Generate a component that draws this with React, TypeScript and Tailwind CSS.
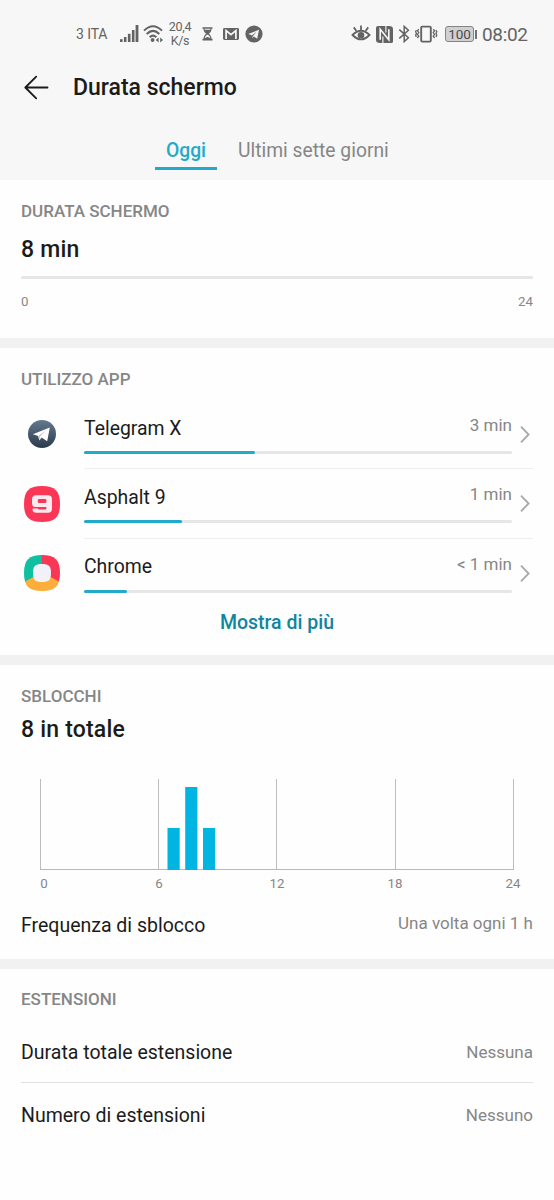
import React from 'react';

const apps = [
  { name: 'Telegram X', time: '3 min', percent: 40, Icon: TelegramXIcon },
  { name: 'Asphalt 9', time: '1 min', percent: 23, Icon: AsphaltIcon },
  { name: 'Chrome', time: '< 1 min', percent: 10, Icon: ChromeIcon },
];

const unlocks = [
  { x: 127.5, height: 42 },
  { x: 145.2, height: 83 },
  { x: 163, height: 42 },
];

function TelegramXIcon() {
  return (
    <svg width="36" height="36" viewBox="0 0 36 36">
      <defs>
        <linearGradient id="tgx" x1="0" y1="0" x2="0" y2="1">
          <stop offset="0" stopColor="#64798f" />
          <stop offset="1" stopColor="#2b3a4b" />
        </linearGradient>
      </defs>
      <circle cx="18" cy="18" r="14" fill="url(#tgx)" />
      <path d="M8.8 18.2 L25.8 11.6 L23.2 25.2 L17.6 21.6 L15.4 24.4 L14.2 19.9 Z" fill="#fff" />
      <path d="M14.2 19.9 L22 14.5 L16 20.8 L15.4 24.4 Z" fill="#c3ccd6" />
    </svg>
  );
}

function AsphaltIcon() {
  return (
    <svg width="36" height="36" viewBox="0 0 36 36">
      <path d="M18 0 C31 0 36 5 36 18 C36 31 31 36 18 36 C5 36 0 31 0 18 C0 5 5 0 18 0 Z" fill="#fb3757" />
      <path
        fillRule="evenodd"
        d="M12 9.2 H24 Q28 9.2 28 13 V22.8 Q28 26.8 24 26.8 H12.4 Q8.6 26.8 8.6 23.8 V22.6 H14 Q14 23.6 15 23.6 H21 Q22.4 23.6 22.4 22.4 V21 H12 Q8 21 8 17.4 V13 Q8 9.2 12 9.2 Z M15 13 Q13.8 13 13.8 14 V16 Q13.8 17 15 17 H21.2 Q22.4 17 22.4 16 V14 Q22.4 13 21.2 13 Z"
        fill="#fdeaf0"
      />
    </svg>
  );
}

function ChromeIcon() {
  return (
    <svg width="36" height="36" viewBox="0 0 36 36">
      <defs>
        <clipPath id="squircle">
          <path d="M18 0 C31 0 36 5 36 18 C36 31 31 36 18 36 C5 36 0 31 0 18 C0 5 5 0 18 0 Z" />
        </clipPath>
      </defs>
      <g clipPath="url(#squircle)">
        <path d="M18 18 V0 H0 V28 Z" fill="#0fc0a0" />
        <path d="M18 18 V0 H36 V28 Z" fill="#fb3757" />
        <path d="M18 17.5 L-2 28 V36 H38 V28 Z" fill="#fcad3a" />
      </g>
      <path d="M18 9 C25 9 27 11 27 18 C27 25 25 27 18 27 C11 27 9 25 9 18 C9 11 11 9 18 9 Z" fill="#f1f1f7" />
    </svg>
  );
}

function StatusBar() {
  return (
    <div className="flex h-14 pt-[22px] pl-[76px] text-[#636363]">
      <span className="w-[44px] text-[14px] leading-6 tracking-[-0.1px] whitespace-nowrap">3 ITA</span>
      {/* Signal */}
      <svg className="mt-[2px]" width="19" height="20" viewBox="0 0 19 20" fill="currentColor">
        <rect x="0" y="15.2" width="2.6" height="2.8" />
        <rect x="3.9" y="13" width="2.6" height="5" />
        <rect x="7.9" y="9.8" width="2.6" height="8.2" />
        <rect x="11.9" y="6" width="2.6" height="12" />
        <rect x="15.6" y="1" width="2.8" height="17" />
      </svg>
      {/* Wifi */}
      <svg className="ml-1" width="21" height="24" viewBox="0 0 21 24" fill="none" stroke="currentColor" strokeWidth="2">
        <path d="M1 8.6 Q10 -0.2 19 8.6" />
        <path d="M3.7 12 Q10 5.8 16.3 12" />
        <path d="M6.7 15.3 Q10 12 13.3 15.3" />
        <circle cx="9.6" cy="18" r="1.9" fill="currentColor" stroke="none" />
        <path d="M15.6 15.4 V20.6 L12.8 18 Z M17.2 15.4 V20.6 L20 18 Z" fill="currentColor" stroke="none" />
      </svg>
      <div className="ml-[3px] -mt-[2px] w-[26px] text-center text-[12.5px] leading-[14px] tracking-[-0.3px]">
        <div>20,4</div>
        <div>K/s</div>
      </div>
      {/* Hourglass */}
      <svg className="ml-[9px] mt-[5px]" width="11" height="14" viewBox="0 0 11 14" fill="none" stroke="currentColor" strokeWidth="1.2">
        <path d="M0.5 1 H10.5 M0.5 12.6 H10.5" strokeWidth="1.6" />
        <path d="M2 1.5 Q2 5 5.5 6.8 Q9 5 9 1.5 M2 12.4 Q2 8.6 5.5 6.8 Q9 8.6 9 12.4" />
        <path d="M3 3.4 H8 L5.5 6.5 Z M3 12 Q5.5 9 8 12 Z" fill="currentColor" />
      </svg>
      {/* Gmail */}
      <svg className="ml-[10px] mt-[6px]" width="16" height="12" viewBox="0 0 16 12">
        <rect width="16" height="12" rx="1.4" fill="currentColor" />
        <path d="M3.1 11 V2.6 L8 6.6 L12.9 2.6 V11" fill="none" stroke="#f7f7f7" strokeWidth="1.7" />
      </svg>
      {/* Telegram */}
      <svg className="ml-[6px] mt-[3px]" width="18" height="18" viewBox="0 0 18 18">
        <circle cx="9" cy="9" r="8.6" fill="currentColor" />
        <path d="M3.3 9 L14 4.7 L12.2 13.8 L8.8 11.4 L7.2 13 L6.8 10.3 Z" fill="#f7f7f7" />
        <path d="M7 10.3 L11.8 6.5 L8 11 L7.2 12.7 Z" fill="currentColor" />
      </svg>

      <div className="ml-[88px] flex items-start">
        {/* Eye comfort */}
        <svg className="mt-[2px]" width="20" height="19" viewBox="0 0 20 19" fill="none" stroke="currentColor" strokeWidth="1.8">
          <path d="M1.5 11 Q10 2.6 18.5 11 Q10 19.8 1.5 11 Z" />
          <circle cx="10" cy="11.2" r="3.3" fill="currentColor" stroke="none" />
          <path d="M10 6.4 V1.4 M5.4 7 L2.8 3.4 M14.6 7 L17.2 3.4" />
        </svg>
        {/* NFC */}
        <svg className="ml-[5px] mt-[4px]" width="17" height="17" viewBox="0 0 17 17">
          <path d="M2 0 H13 Q17 0 17 3 V15.4 Q17 17 15 17 H4 Q0 17 0 14 V2 Q0 0 2 0 Z" fill="currentColor" />
          <path d="M4.2 13.8 V3.2 L12.8 13.8 V3.2" fill="none" stroke="#f7f7f7" strokeWidth="1.6" />
          <path d="M6.9 17 V10.4 M9.9 0 V6.6" fill="none" stroke="#f7f7f7" strokeWidth="1.1" />
        </svg>
        {/* Bluetooth */}
        <svg className="ml-[5px] mt-[3px]" width="13" height="18" viewBox="0 0 13 18" fill="none" stroke="currentColor" strokeWidth="1.5">
          <path d="M1.3 4.6 L10.4 12.8 L6.2 16.6 V1.4 L10.4 5.2 L1.3 13.4" />
        </svg>
        {/* Vibration */}
        <svg className="ml-[4px] mt-[3px]" width="23" height="18" viewBox="0 0 23 18" fill="none" stroke="currentColor">
          <rect x="6.2" y="1.6" width="9.6" height="15" rx="1" strokeWidth="1.9" />
          <path
            d="M3.8 4.2 L2.4 5.8 L3.8 7.6 L2.4 9.4 L3.8 11.2 L2.4 13 M1.4 5.2 L0.6 6.6 L1.4 8.4 L0.6 10.2 L1.4 12 M18.2 4.2 L19.6 5.8 L18.2 7.6 L19.6 9.4 L18.2 11.2 L19.6 13 M21 5.2 L21.8 6.6 L21 8.4 L21.8 10.2 L21 12"
            strokeWidth="1.3"
          />
        </svg>
        {/* Battery */}
        <div className="ml-[7px] mt-[4px] flex items-center">
          <div className="h-4 w-[29px] rounded-[3px] border border-[#858585] bg-[#d0d0d0] text-center text-[13.5px] leading-[15px] tracking-[-0.1px] text-[#4c4c4c]">
            100
          </div>
          <div className="ml-px h-[9px] w-[2px] bg-[#737373]" />
        </div>
        <span className="ml-[5px] text-[19px] leading-[25px] tracking-[-0.35px]">08:02</span>
      </div>
    </div>
  );
}

function SectionTitle({ children }: { children: React.ReactNode }) {
  return <h2 className="pb-px text-[17px] leading-5 font-medium text-[#868686]">{children}</h2>;
}

function Divider() {
  return <div className="h-[10px] bg-[#f1f1f1]" />;
}

function UnlockChart() {
  return (
    <div className="mt-[36px] ml-[19px]">
      <svg className="block" width="474" height="92" viewBox="0 0 474 92">
        {[0, 118, 236, 355, 473].map((x) => (
          <rect key={x} x={x} y="0" width="1" height="91" fill="#bdbdbd" />
        ))}
        <rect x="0" y="90" width="474" height="1" fill="#b8b8b8" />
        {unlocks.map((bar) => (
          <rect key={bar.x} x={bar.x} y={91 - bar.height} width="12.2" height={bar.height} fill="#00b5e2" />
        ))}
      </svg>
      <div className="-ml-[58px] mt-[4px] flex w-[590px] text-[13.3px] leading-[18px] text-[#868686]">
        <span className="w-[118px] pl-[6px] text-center">0</span>
        <span className="w-[118px] text-center">6</span>
        <span className="w-[118px] text-center">12</span>
        <span className="w-[118px] text-center">18</span>
        <span className="w-[118px] text-center">24</span>
      </div>
    </div>
  );
}

export default function App() {
  return (
    <div className="h-[1200px] w-[554px] overflow-hidden bg-[#fefefe] font-['Roboto',sans-serif] text-[#1b1b1b]">
      <header className="h-[180px] bg-[#f7f7f7]">
        <StatusBar />
        <div className="flex h-[62px] items-center pl-6">
          <svg width="25" height="25" viewBox="0 0 25 25" fill="none" stroke="#1b1b1b" strokeWidth="1.8" strokeLinecap="round" strokeLinejoin="round">
            <path d="M23.5 12.5 H1.5 M12.2 1.6 L1.3 12.5 L12.2 23.4" />
          </svg>
          <h1 className="ml-6 pt-[2px] text-[23px] leading-[26px] font-medium">Durata schermo</h1>
        </div>
        <div className="flex pt-5 pl-[155px] text-[19.3px]">
          <div className="h-8 w-[62px] border-b-[3px] border-[#22aacb] pt-px text-center leading-6 font-medium text-[#22aacb]">
            Oggi
          </div>
          <div className="ml-[21px] pt-px leading-6 text-[#868686]">Ultimi sette giorni</div>
        </div>
      </header>

      <section className="h-[158px] px-[21px] pt-[21px]">
        <SectionTitle>DURATA SCHERMO</SectionTitle>
        <p className="mt-[15px] text-[23px] leading-[26px] font-medium tracking-[0.2px]">8 min</p>
        <div className="mt-[13px] h-[3px] rounded-full bg-[#e6e6e6]" />
        <div className="mt-[14px] flex justify-between text-[13.3px] leading-[18px] text-[#868686]">
          <span>0</span>
          <span>24</span>
        </div>
      </section>

      <Divider />

      <section className="h-[307px] pt-[21px] pl-[21px]">
        <SectionTitle>UTILIZZO APP</SectionTitle>
        <div className="mt-[10px]">
          {apps.map(({ name, time, percent, Icon }, index) => (
            <div key={name} className="flex h-[69.3px] pl-[3px]">
              <div className="mt-[16.4px]">
                <Icon />
              </div>
              <div className={index < apps.length - 1 ? 'ml-6 flex w-[449px] border-b border-[#eeeeee]' : 'ml-6 flex w-[449px]'}>
                <div className="w-[428px]">
                  <div className="flex h-[51px] justify-between pt-[15px]">
                    <span className="mt-[1.6px] text-[19.4px] leading-6">{name}</span>
                    <span className="text-[17px] leading-5 text-[#868686]">{time}</span>
                  </div>
                  <div className="h-[3px] rounded-full bg-[#e6e6e6]">
                    <div className="h-full rounded-full bg-[#22aacb]" style={{ width: `${percent}%` }} />
                  </div>
                </div>
                <svg className="mt-[25px] ml-[8px]" width="11" height="19" viewBox="0 0 11 19" fill="none" stroke="#a8a8a8" strokeWidth="1.8">
                  <path d="M1 1.7 L8.6 9.5 L1 17.3" />
                </svg>
              </div>
            </div>
          ))}
        </div>
        <button className="block w-[512px] pt-[3px] text-center text-[19.5px] leading-6 font-medium text-[#11849f]">
          Mostra di più
        </button>
      </section>

      <Divider />

      <section className="h-[294px] px-[21px] pt-[21px]">
        <SectionTitle>SBLOCCHI</SectionTitle>
        <p className="mt-[10px] text-[23px] leading-[26px] font-medium tracking-[0.2px]">8 in totale</p>
        <UnlockChart />
        <div className="mt-[20px] flex justify-between">
          <span className="mt-px text-[19.5px] leading-6">Frequenza di sblocco</span>
          <span className="text-[17px] leading-5 text-[#868686]">Una volta ogni 1 h</span>
        </div>
      </section>

      <Divider />

      <section className="px-[21px] pt-[20px]">
        <SectionTitle>ESTENSIONI</SectionTitle>
        <div className="mt-[12px] flex h-[61px] items-center justify-between border-b border-[#e2e2e2] pt-px">
          <span className="text-[19.5px]">Durata totale estensione</span>
          <span className="text-[17px] text-[#868686]">Nessuna</span>
        </div>
        <div className="flex h-[66px] items-center justify-between">
          <span className="text-[19.5px]">Numero di estensioni</span>
          <span className="text-[17px] text-[#868686]">Nessuno</span>
        </div>
      </section>
    </div>
  );
}
